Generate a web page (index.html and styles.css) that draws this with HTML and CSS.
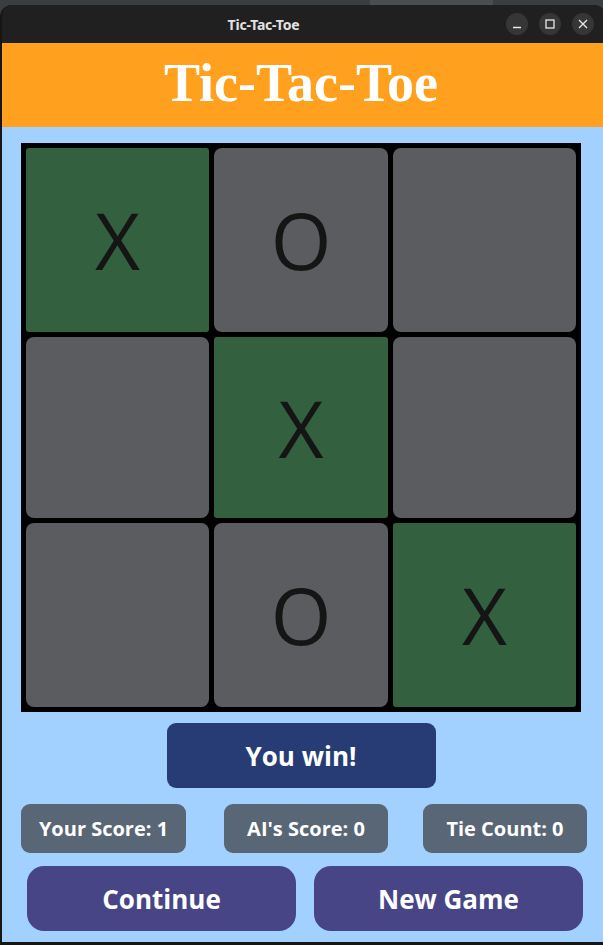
FILE: index.html
```html
<!DOCTYPE html>
<html>
<head>
<meta charset="utf-8">
<title>Tic-Tac-Toe</title>
<link rel="stylesheet" href="styles.css">
</head>
<body>
<div class="desktop">
  <div class="desk-patch"></div>
  <div class="window">
    <div class="titlebar">
      <div class="wtitle">Tic-Tac-Toe</div>
      <div class="wcontrols">
        <span class="wbtn"><svg width="10" height="10" viewBox="0 0 10 10"><path d="M1 8.5H9" stroke="#e8e8e8" stroke-width="1.3"/></svg></span>
        <span class="wbtn"><svg width="10" height="10" viewBox="0 0 10 10"><rect x="1" y="1" width="8" height="8" fill="none" stroke="#e8e8e8" stroke-width="1.3"/></svg></span>
        <span class="wbtn"><svg width="10" height="10" viewBox="0 0 10 10"><path d="M1 1L9 9M9 1L1 9" stroke="#e8e8e8" stroke-width="1.3"/></svg></span>
      </div>
    </div>
    <header class="header">Tic-Tac-Toe</header>
    <main class="content">
      <div class="board">
        <div class="cell win">X</div>
        <div class="cell">O</div>
        <div class="cell"></div>
        <div class="cell"></div>
        <div class="cell win">X</div>
        <div class="cell"></div>
        <div class="cell"></div>
        <div class="cell">O</div>
        <div class="cell win">X</div>
      </div>
      <div class="status-row"><div class="status">You win!</div></div>
      <div class="scores">
        <div class="score first">Your Score: 1</div>
        <div class="score second">AI's Score: 0</div>
        <div class="score third">Tie Count: 0</div>
      </div>
      <div class="actions">
        <button class="action">Continue</button>
        <button class="action">New Game</button>
      </div>
    </main>
  </div>
</div>
</body>
</html>
```
FILE: styles.css
```css
* { box-sizing: border-box; }
html, body { margin: 0; padding: 0; }
body {
  width: 603px;
  height: 945px;
  overflow: hidden;
  background: #3a3d41;
}
.desktop {
  position: relative;
  width: 603px;
  height: 945px;
  padding-top: 5px;
}
.desk-patch {
  position: absolute;
  left: 370px;
  top: 0;
  width: 123px;
  height: 5px;
  background: #4a4d52;
}
.window {
  width: 606px;
  height: 940px;
  background: #1b1b1b;
  border-radius: 12px 12px 0 0;
  border-left: 2px solid #161616;
  border-bottom: 3px solid #161616;
  overflow: hidden;
  display: flex;
  flex-direction: column;
}
.titlebar {
  height: 38px;
  background: #202020;
  display: flex;
  align-items: center;
  flex: none;
}
.wtitle {
  flex: 1;
  text-align: center;
  padding-left: 21px;
  color: #e2e2e2;
  font-family: "Noto Sans", "Open Sans", sans-serif;
  font-weight: 700;
  font-size: 14px;
  letter-spacing: -0.2px;
}
.wcontrols {
  display: flex;
  gap: 11px;
  padding-right: 12px;
  margin-left: 2px;
}
.wbtn {
  width: 22px;
  height: 22px;
  border-radius: 50%;
  background: #363636;
  display: flex;
  align-items: center;
  justify-content: center;
}
.header {
  height: 84px;
  flex: none;
  background: #ffa11f;
  color: #ffffff;
  font-family: "Liberation Serif", "Times New Roman", serif;
  font-weight: 700;
  font-size: 54px;
  display: flex;
  align-items: center;
  justify-content: center;
  padding-right: 6px;
  padding-bottom: 4px;
}
.content {
  flex: 1;
  background: #a3d1ff;
  padding: 16px 0 11px 19px;
  font-family: "Open Sans", "Noto Sans", sans-serif;
}
.board {
  width: 560px;
  height: 569px;
  background: #000;
  padding: 5px;
  display: grid;
  grid-template-columns: 183px 174px 183px;
  grid-template-rows: 184px 181px 184px;
  gap: 5px;
}
.cell {
  background: #5b5c60;
  border-radius: 8px;
  display: flex;
  align-items: center;
  justify-content: center;
  color: #151515;
  font-family: "Open Sans", sans-serif;
  font-size: 78px;
  font-weight: 400;
  line-height: 1;
}
.cell.win {
  background: #336140;
  border-radius: 3px;
}
.status-row {
  width: 560px;
  display: flex;
  justify-content: center;
  margin-top: 11px;
}
.status {
  width: 269px;
  height: 65px;
  background: #273c75;
  border-radius: 9px;
  color: #fff;
  font-weight: 700;
  font-size: 26px;
  display: flex;
  align-items: center;
  justify-content: center;
}
.scores {
  display: flex;
  margin-top: 16px;
}
.score {
  width: 164px;
  height: 49px;
  background: #596676;
  border-radius: 9px;
  color: #fff;
  font-weight: 700;
  font-size: 20px;
  display: flex;
  align-items: center;
  justify-content: center;
}
.score.first { width: 165px; }
.score.second { margin-left: 38px; }
.score.third { margin-left: 35px; }
.actions {
  display: flex;
  gap: 18px;
  margin-top: 13px;
  padding-left: 6px;
}
.action {
  width: 269px;
  height: 65px;
  border: none;
  background: #484586;
  border-radius: 17px;
  color: #fff;
  font-family: "Open Sans", "Noto Sans", sans-serif;
  font-weight: 700;
  font-size: 26px;
  padding: 0;
}
```
